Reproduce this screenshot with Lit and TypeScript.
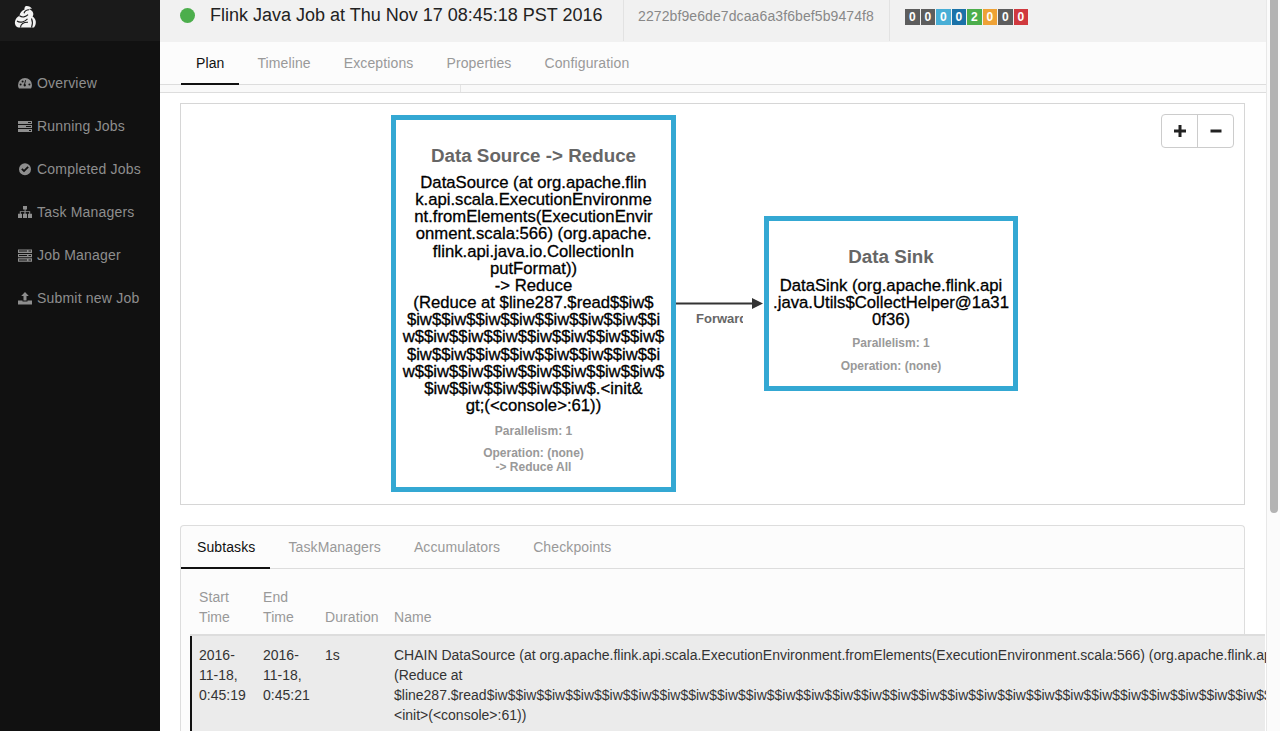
import { LitElement, html, css, svg } from "lit";
import { customElement } from "lit/decorators.js";

const ICONS = [
  svg`<path d="M7 2a7 7 0 0 0-7 7c0 1.300.4 2.600 1 3.600h12c.6-1 1-2.300 1-3.600a7 7 0 0 0-7-7zM2.600 9.600a1 1 0 1 1 0-2 1 1 0 0 1 0 2zm2-3.200a1 1 0 1 1 0-2 1 1 0 0 1 0 2zM7 10.600a1.500 1.500 0 0 1-.7-2.800l.9-3.800.8.2-.9 3.700A1.500 1.500 0 0 1 7 10.600zm4.400-1a1 1 0 1 1 0-2 1 1 0 0 1 0 2z"/>`,
  svg`<path d="M0 2h14v3H0zM0 6h14v3H0zM0 10h14v3H0z"/><path d="M10 3h3v1h-3zM8 7h5v1H8zM11 11h2v1h-2z" fill="#111"/>`,
  svg`<path d="M7 1.200a6 6 0 1 0 0 12 6 6 0 0 0 0-12zM6 10.300 3.200 7.500l1.300-1.300L6 7.700l3.500-3.500 1.300 1.300z"/>`,
  svg`<path d="M5 1h4v3.400H7.600v1.800h4.600v2.600H14V13H10V8.800h1.200V7.100H7.600v1.700H9V13H5V8.800h1.400V7.100H2.800v1.700H4V13H0V8.800h1.800V6.200h4.800V4.400H5z"/>`,
  svg`<path d="M0 1.500h14V5H0zM0 6h14v3.200H0zM0 10.200h14V13.700H0z"/><path d="M1 2.500h8v1H1zM10.500 2.500h2.500v1h-2.500zM1 7.100h8v1H1zM10.500 7.100h2.500v1h-2.500zM1 11.400h8v1H1zM10.500 11.400h2.500v1h-2.500z" fill="#111"/>`,
  svg`<path d="M7 1 3.200 5H5.500v4.500h3V5h2.300zM0 9.500h4.500v1h5v-1H14V13.500H0z"/>`,
];

const NAV = ["Overview", "Running Jobs", "Completed Jobs", "Task Managers", "Job Manager", "Submit new Job"];
const BADGES: [string, string][] = [
  ["0", "#5d5d5d"], ["0", "#5d5d5d"], ["0", "#48aed6"], ["0", "#1a72a8"],
  ["2", "#4cae4c"], ["0", "#eea236"], ["0", "#5d5d5d"], ["0", "#d0393e"],
];

const SRC = [
  "DataSource (at org.apache.flin", "k.api.scala.ExecutionEnvironme", "nt.fromElements(ExecutionEnvir",
  "onment.scala:566) (org.apache.", "flink.api.java.io.CollectionIn", "putFormat))", "-> Reduce",
  "(Reduce at $line287.$read$$iw$", "$iw$$iw$$iw$$iw$$iw$$iw$$iw$$i", "w$$iw$$iw$$iw$$iw$$iw$$iw$$iw$",
  "$iw$$iw$$iw$$iw$$iw$$iw$$iw$$i", "w$$iw$$iw$$iw$$iw$$iw$$iw$$iw$", "$iw$$iw$$iw$$iw$$iw$.<init&", "gt;(<console>:61))",
];
const SINK = ["DataSink (org.apache.flink.api", ".java.Utils$CollectHelper@1a31", "0f36)"];

@customElement("app-root")
export class AppRoot extends LitElement {
  static styles = css`
    :host { display: block; width: 1280px; height: 731px; overflow: hidden; position: relative;
      font-family: "Liberation Sans", Arial, sans-serif; font-size: 14px; background: #fff; }
    .app { display: flex; height: 731px; }
    .side { width: 160px; flex: none; background: #111; color: #8e8e8e; }
    .brand { height: 41px; background: #1a1a1a; padding: 5px 0 0 14px; box-sizing: border-box; }
    .nav { padding-top: 20px; display: flex; flex-direction: column; }
    .nav-item { height: 43px; display: flex; align-items: center; padding-left: 18px; gap: 5px; letter-spacing: 0.2px; }
    .nav-item svg { width: 14px; height: 14px; fill: #8e8e8e; flex: none; }
    .main { width: 1106px; flex: none; overflow: hidden; display: flex; flex-direction: column; }
    .head { height: 42px; flex: none; background: #f1f1f1; display: flex; align-items: stretch; box-sizing: border-box; padding-bottom: 1px; }
    .head-a { display: flex; align-items: center; padding: 0 0 10px 20px; width: 464px; box-sizing: border-box; border-right: 1px solid #e2e2e2; }
    .dot { width: 15px; height: 15px; border-radius: 50%; background: #4cae4c; margin-right: 15px; flex: none; }
    .title { font-size: 18px; color: #222; white-space: nowrap; }
    .head-b { display: flex; align-items: center; padding: 0 0 9px 14px; width: 266px; box-sizing: border-box; border-right: 1px solid #e2e2e2; color: #888; font-size: 14px; letter-spacing: 0.1px; }
    .head-c { display: flex; align-items: flex-start; padding: 9px 0 0 15px; gap: 1px; }
    .badge { width: 14.5px; height: 16px; display: flex; align-items: center; justify-content: center; color: #fff; font-size: 12px; font-weight: bold; }
    .tabs { display: flex; gap: 3px; letter-spacing: 0.12px; }
    .top-tabs { height: 43px; flex: none; background: #fcfcfc; border-bottom: 1px solid #ddd; box-sizing: border-box; padding-left: 21px; }
    .tab { padding: 0 15px; display: flex; align-items: center; color: #999; box-sizing: border-box; height: 100%; position: relative; }
    .tab.on { color: #111; letter-spacing: 0.1px; }
    .tab.on::after { content: ""; position: absolute; left: 0; right: 0; bottom: -1px; height: 2px; background: #111; }
    .strip { height: 7px; flex: none; background: #f9f9f9; border-bottom: 1px solid #ddd; display: flex; }
    .strip div { width: 300px; border-right: 1px solid #e4e4e4; }
    .content { padding: 10px 21px 0 20px; display: flex; flex-direction: column; gap: 20px; }
    .plan { height: 402px; border: 1px solid #d6d6d6; box-sizing: border-box; position: relative; overflow: hidden; flex: none; }
    .node { position: absolute; border: 5px solid #34a8d3; box-sizing: border-box; text-align: center; background: #fff; display: flex; flex-direction: column; align-items: center; }
    .n1 { left: 210px; top: 11px; width: 285px; height: 377px; padding-top: 26px; }
    .n2 { left: 583px; top: 112px; width: 254px; height: 175px; padding-top: 26px; }
    .node h4 { margin: 0; font-size: 18.8px; line-height: 20px; font-weight: bold; color: #666; white-space: nowrap; }
    .desc { color: #000; font-size: 16.7px; line-height: 17.15px; white-space: nowrap; -webkit-text-stroke: 0.3px #000; }
    .n1 .desc { margin-top: 8px; }
    .n2 .desc { margin-top: 10px; }
    .meta { color: #999; font-size: 12px; font-weight: bold; line-height: 14px; }
    .n1 .par { margin-top: 10px; }
    .n2 .par { margin-top: 8px; }
    .n1 .op { margin-top: 8px; }
    .n2 .op { margin-top: 9px; }
    .edge { position: absolute; left: 494px; top: 190px; }
    .edge-label { position: absolute; left: 515px; top: 208px; width: 47px; overflow: hidden; white-space: nowrap; font-size: 13px; font-weight: bold; color: #666; line-height: 14px; }
    .zoom { position: absolute; left: 980px; top: 10px; display: flex; height: 34px; border: 1px solid #ccc; border-radius: 4px; background: #fff; box-sizing: border-box; width: 73px; }
    .zoom span { flex: 1; display: flex; align-items: center; justify-content: center; }
    .zoom span + span { border-left: 1px solid #ccc; }
    .zoom svg { width: 12px; height: 12px; fill: #222; }
    .tasks { border: 1px solid #ddd; border-bottom: none; border-radius: 4px 4px 0 0; background: #fcfcfc; flex: none; height: 240px; position: relative; }
    .sub-tabs { height: 43px; border-bottom: 1px solid #ddd; box-sizing: border-box; padding-left: 0; }
    .sub-tabs .tab:first-child { padding-left: 16px; }
    .table-wrap { position: absolute; left: 9px; top: 43px; width: 1075px; }
    .thead { display: flex; color: #999; line-height: 20px; height: 67px; box-sizing: border-box; padding-top: 18px; border-bottom: 2px solid #ddd; letter-spacing: 0.1px; }
    .row { display: flex; background: #ebebeb; border-left: 2px solid #111; line-height: 20px; color: #333; height: 100px; box-sizing: border-box; padding-top: 9px; }
    .c1 { width: 73px; padding-left: 9px; box-sizing: border-box; flex: none; }
    .c2 { width: 62px; flex: none; }
    .c3 { width: 69px; flex: none; }
    .c4 { flex: none; white-space: nowrap; }
    .row .c1 { width: 71px; padding-left: 7px; }
    .scroll { position: absolute; left: 1266px; top: 0; width: 14px; height: 731px; background: #fbfbfb; border-left: 1px solid #e8e8e8; box-sizing: border-box; }
    .thumb { position: absolute; left: 3px; top: 0; width: 8px; height: 513px; background: #b3b3b3; border-radius: 0 0 4px 4px; }
  `;

  render() {
    const dollars = "$iw$".repeat(41);
    return html`
      <div class="app">
        <aside class="side">
          <div class="brand">
            <svg width="24" height="24" viewBox="0 0 24 24">
              <path fill="#f2f2f2" d="M12 1c2.500-.3 5 .8 6 3-1-.4-2-.4-3 .2 2 .6 3.800 2 4.200 4 .3 1.300 0 2.300-.6 3.200 1.800 1 3 3 3.200 5 .2 2.500-.6 4.600-1.800 6H4.500C2 22 .5 19.500 1 16.500c.4-2.600 2.200-4.800 4.500-5.800C5.800 8 7.800 5.600 10.500 4.600 10.200 3.200 10.800 1.500 12 1z"/>
              <path fill="none" stroke="#1a1a1a" stroke-width="1.100" d="M5.500 10.700c2.500 2 6.500 1.500 8.500-1M3 16c3 2.200 7.500 1 10.500-2.200M6.500 22.500c0-3.300 3.200-5.500 7.500-5.300M15 4.800c-2.200 0-4.200 1.200-5 3.400M17.500 13.500c1.200 2.800 1.200 6 0 9"/>
            </svg>
          </div>
          <nav class="nav">
            ${NAV.map((n, i) => html`<div class="nav-item"><svg viewBox="0 0 14 14">${ICONS[i]}</svg><span>${n}</span></div>`)}
          </nav>
        </aside>
        <main class="main">
          <div class="head">
            <div class="head-a"><span class="dot"></span><span class="title">Flink Java Job at Thu Nov 17 08:45:18 PST 2016</span></div>
            <div class="head-b">2272bf9e6de7dcaa6a3f6bef5b9474f8</div>
            <div class="head-c">${BADGES.map(([t, c]) => html`<span class="badge" style="background:${c}">${t}</span>`)}</div>
          </div>
          <div class="tabs top-tabs">
            ${["Plan", "Timeline", "Exceptions", "Properties", "Configuration"].map((t, i) => html`<div class="tab ${i === 0 ? "on" : ""}">${t}</div>`)}
          </div>
          <div class="strip"><div></div></div>
          <div class="content">
            <section class="plan">
              <svg class="edge" width="90" height="20" viewBox="0 0 90 20">
                <path d="M0 9.500h80" stroke="#333" stroke-width="2" fill="none"/>
                <path d="M77 4l11 5.500-11 5.500z" fill="#333"/>
              </svg>
              <div class="edge-label">Forward</div>
              <div class="node n1">
                <h4>Data Source -&gt; Reduce</h4>
                <div class="desc">${SRC.map((l) => html`${l}<br />`)}</div>
                <div class="meta par">Parallelism: 1</div>
                <div class="meta op">Operation: (none)<br />-&gt; Reduce All</div>
              </div>
              <div class="node n2">
                <h4>Data Sink</h4>
                <div class="desc">${SINK.map((l) => html`${l}<br />`)}</div>
                <div class="meta par">Parallelism: 1</div>
                <div class="meta op">Operation: (none)</div>
              </div>
              <div class="zoom">
                <span><svg viewBox="0 0 12 12"><path d="M4.500 0h3v4.500H12v3H7.500V12h-3V7.500H0v-3h4.500z"/></svg></span>
                <span><svg viewBox="0 0 12 12"><path d="M.5 4.500h11v3H.5z"/></svg></span>
              </div>
            </section>
            <section class="tasks">
              <div class="tabs sub-tabs">
                ${["Subtasks", "TaskManagers", "Accumulators", "Checkpoints"].map((t, i) => html`<div class="tab ${i === 0 ? "on" : ""}">${t}</div>`)}
              </div>
              <div class="table-wrap">
                <div class="thead">
                  <div class="c1">Start<br />Time</div>
                  <div class="c2">End<br />Time</div>
                  <div class="c3"><br />Duration</div>
                  <div class="c4"><br />Name</div>
                </div>
                <div class="row">
                  <div class="c1">2016-<br />11-18,<br />0:45:19</div>
                  <div class="c2">2016-<br />11-18,<br />0:45:21</div>
                  <div class="c3">1s</div>
                  <div class="c4">CHAIN DataSource (at org.apache.flink.api.scala.ExecutionEnvironment.fromElements(ExecutionEnvironment.scala:566) (org.apache.flink.api.java.io.CollectionInputFormat)) -&gt; Reduce<br />(Reduce at<br />$line287.$read${dollars}<br />&lt;init&gt;(&lt;console&gt;:61))</div>
                </div>
              </div>
            </section>
          </div>
        </main>
      </div>
      <div class="scroll"><div class="thumb"></div></div>
    `;
  }
}
